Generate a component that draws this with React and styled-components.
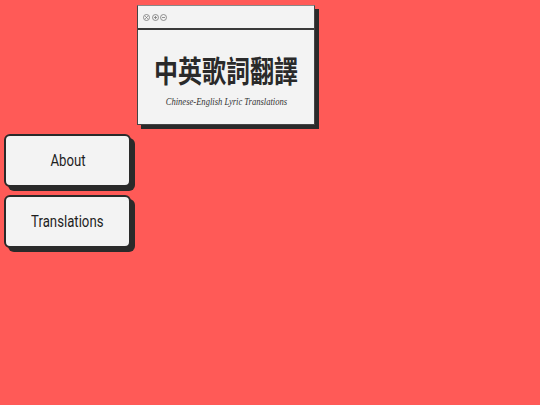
import React from "react";
import styled, { createGlobalStyle } from "styled-components";

const Global = createGlobalStyle`
  html, body { margin: 0; padding: 0; background: #ff5a57; }
  body { width: 540px; height: 405px; overflow: hidden; font-family: Inter, "Noto Sans", sans-serif; }
`;

const Page = styled.div`
  display: grid;
  grid-template-columns: 127px 178px;
  grid-template-rows: 120px auto;
  column-gap: 6px;
  row-gap: 9px;
  padding: 5px 0 0 4px;
`;

const Window = styled.header`
  grid-column: 2;
  grid-row: 1;
  background: #f3f3f3;
  border: 1px solid #444;
  border-top-color: #888;
  box-shadow: 4px 4px 0 #2a2a2a;
  display: flex;
  flex-direction: column;
  box-sizing: border-box;
`;

const TitleBar = styled.div`
  height: 22px;
  border-bottom: 2px solid #3a3a3a;
  display: flex;
  align-items: center;
  padding-left: 5px;
`;

const Body = styled.div`
  flex: 1;
  display: flex;
  flex-direction: column;
  align-items: center;
  padding-top: 23px;
`;

const Title = styled.h1`
  margin: 0;
  font-family: "Noto Sans CJK TC", "Noto Sans CJK SC", sans-serif;
  font-weight: 700;
  font-size: 30px;
  line-height: 32px;
  color: #2a2a2a;
  display: inline-block;
  transform: scaleX(0.8);
  white-space: nowrap;
`;

const Subtitle = styled.p`
  margin: 12px 0 0;
  font-family: "Liberation Serif", serif;
  font-style: italic;
  font-size: 9.5px;
  color: #333;
  display: inline-block;
  transform: scaleX(0.9);
  white-space: nowrap;
`;

const Nav = styled.nav`
  grid-column: 1;
  grid-row: 2;
  display: flex;
  flex-direction: column;
  gap: 8px;
`;

const NavButton = styled.button`
  width: 127px;
  height: 53px;
  box-sizing: border-box;
  background: #f3f3f3;
  border: 2px solid #2a2a2a;
  border-radius: 6px;
  box-shadow: 4px 4px 0 #2a2a2a;
  padding: 0;
  cursor: pointer;
  display: flex;
  align-items: center;
  justify-content: center;
`;

const Label = styled.span`
  font-family: Roboto, "Noto Sans", sans-serif;
  font-size: 16.5px;
  font-weight: 400;
  color: #1e1e1e;
  display: inline-block;
  transform: scaleX(0.8);
  white-space: nowrap;
`;

const Dot = ({ kind }) => (
  <svg width="7" height="7" viewBox="0 0 7 7">
    <circle cx="3.5" cy="3.5" r="3" fill="none" stroke="#777" strokeWidth="0.8" />
    {kind === "x" && (
      <path d="M2.2 2.2 L4.8 4.8 M4.8 2.2 L2.2 4.8" stroke="#777" strokeWidth="0.8" />
    )}
    {kind === "plus" && (
      <path d="M3.5 1.9 V5.1 M1.9 3.5 H5.1" stroke="#777" strokeWidth="0.8" />
    )}
    {kind === "minus" && <path d="M1.9 3.5 H5.1" stroke="#777" strokeWidth="0.8" />}
  </svg>
);

const DotGroup = styled.div`
  display: flex;
  gap: 1.5px;
`;

export default function App() {
  return (
    <>
      <Global />
      <Page>
        <Window>
          <TitleBar>
            <DotGroup>
              <Dot kind="x" />
              <Dot kind="plus" />
              <Dot kind="minus" />
            </DotGroup>
          </TitleBar>
          <Body>
            <Title>中英歌詞翻譯</Title>
            <Subtitle>Chinese-English Lyric Translations</Subtitle>
          </Body>
        </Window>
        <Nav>
          <NavButton><Label>About</Label></NavButton>
          <NavButton><Label>Translations</Label></NavButton>
        </Nav>
      </Page>
    </>
  );
}
